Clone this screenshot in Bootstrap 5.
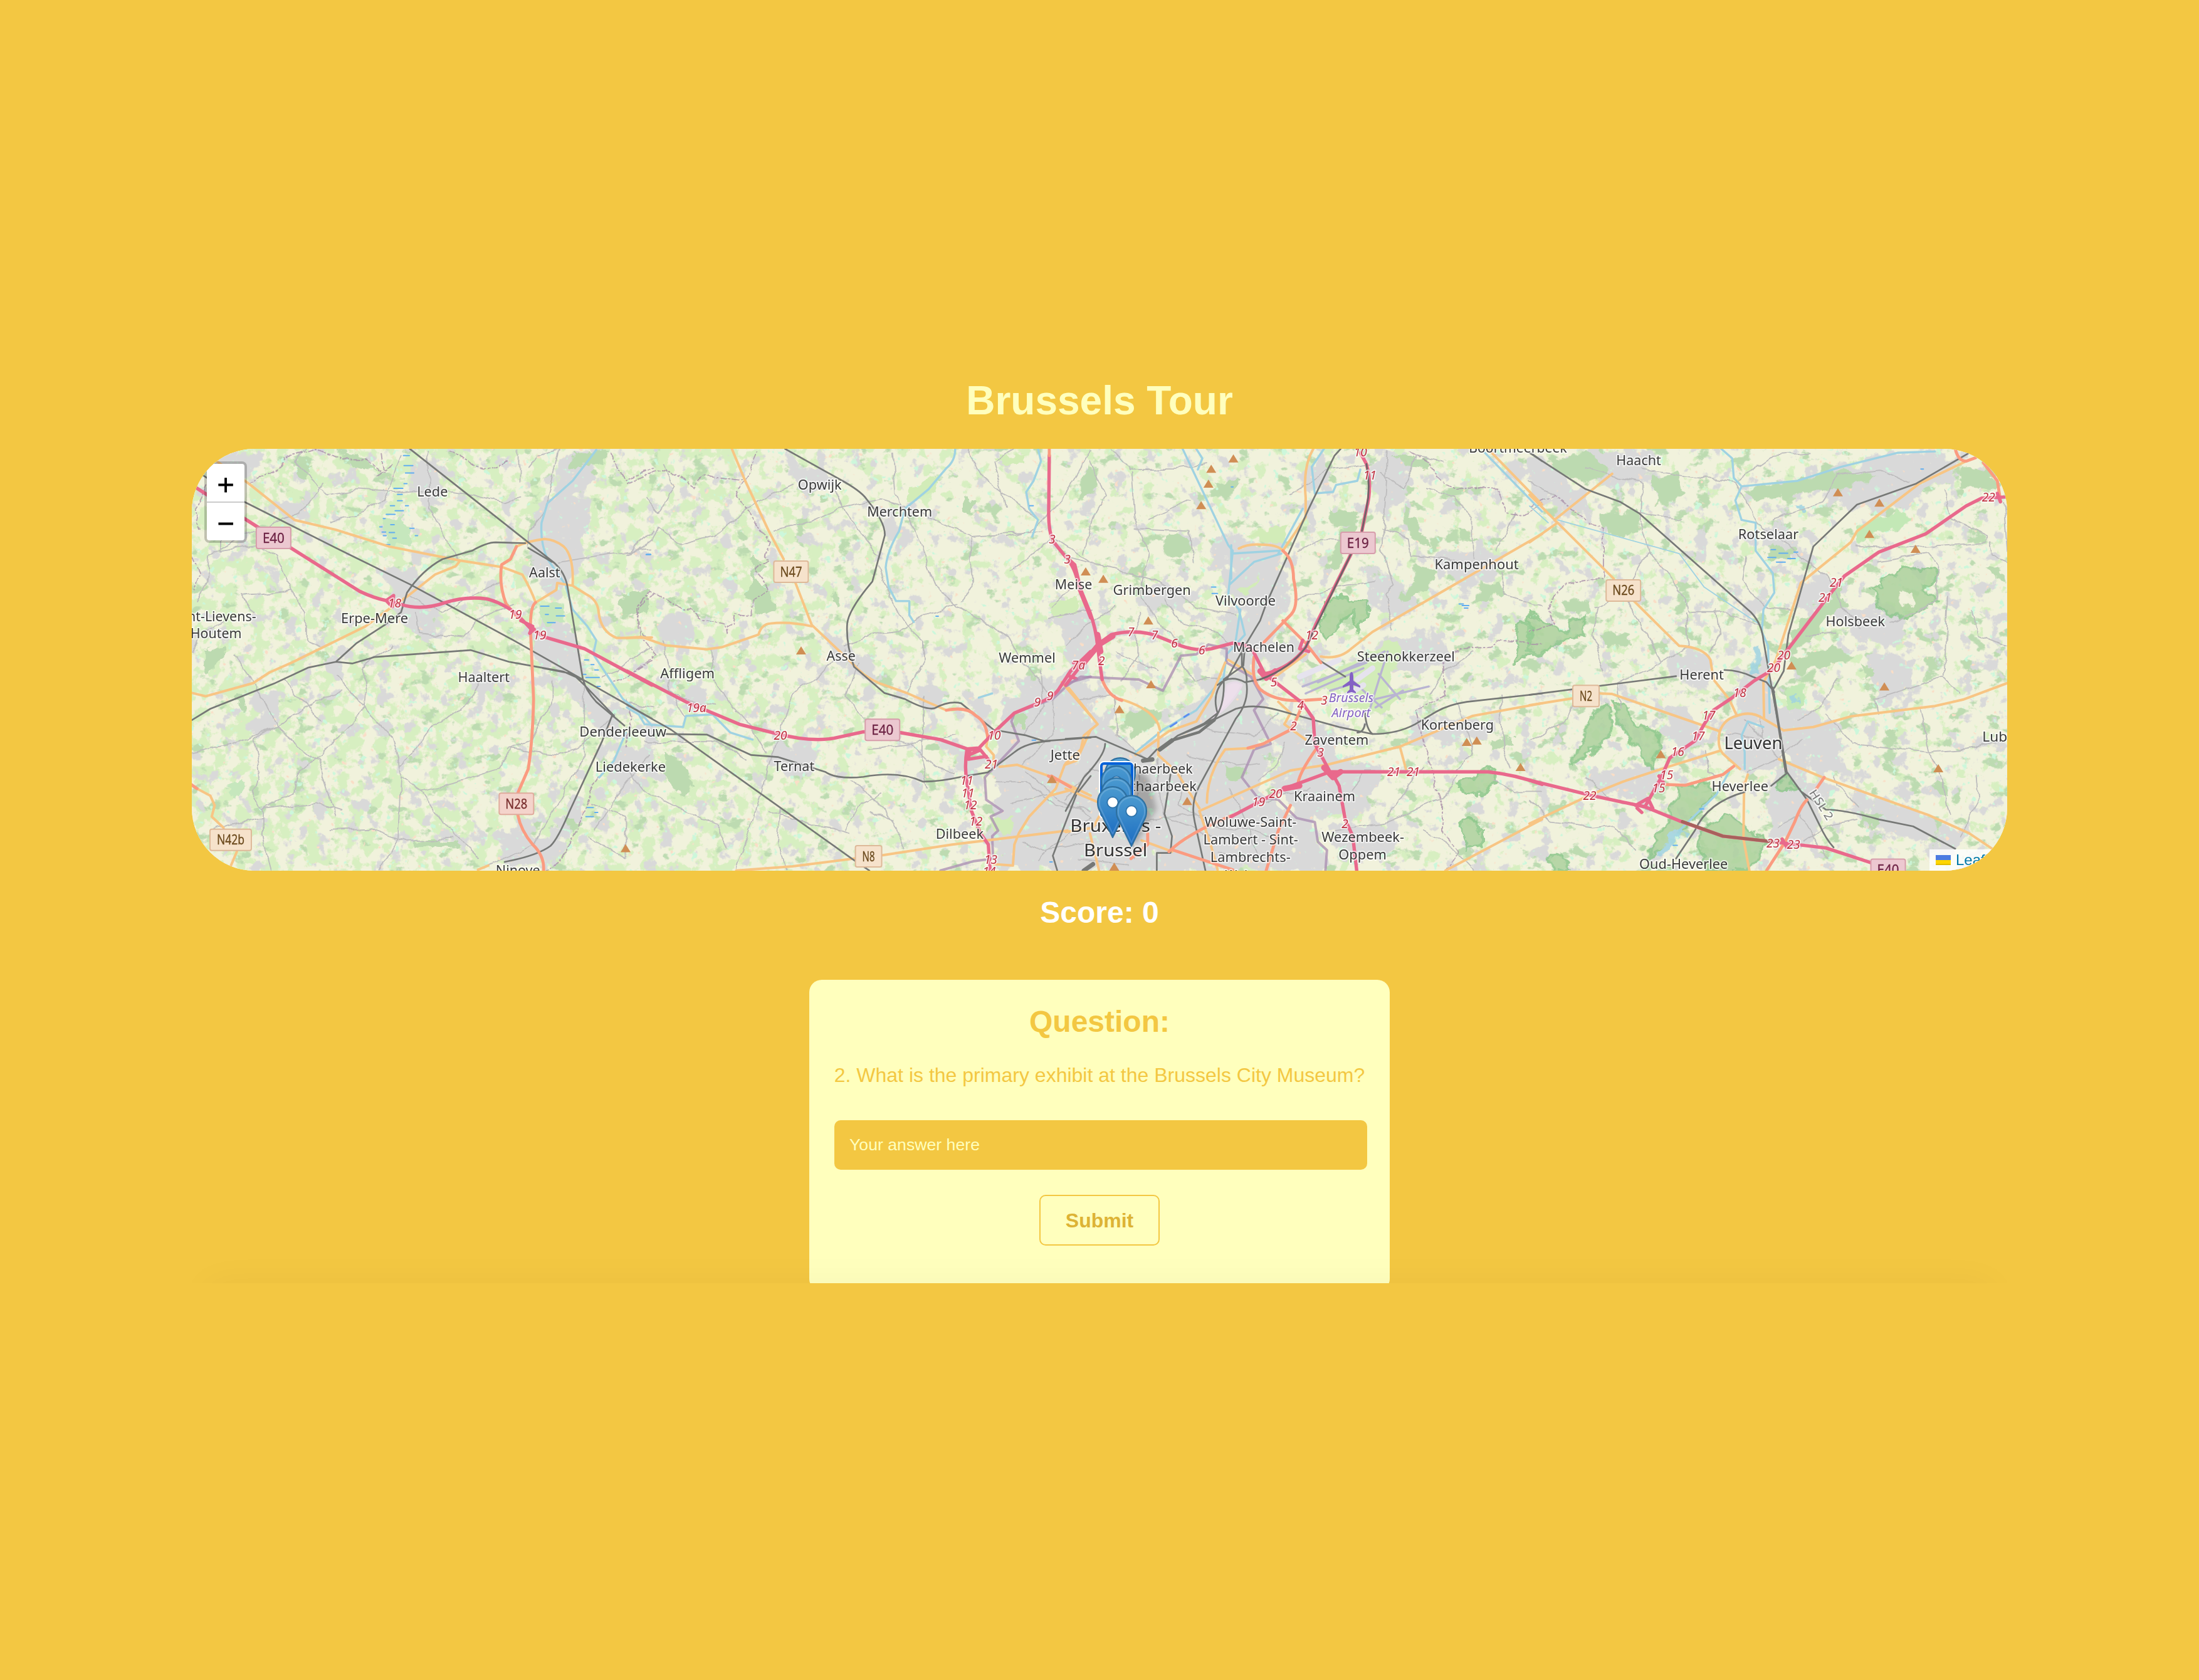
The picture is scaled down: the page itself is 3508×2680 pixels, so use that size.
<!DOCTYPE html>
<html lang="en">
<head>
<meta charset="utf-8">
<title>Brussels Tour</title>
<link href="https://cdn.jsdelivr.net/npm/bootstrap@5.3.0/dist/css/bootstrap.min.css" rel="stylesheet">
<style>
body{background:#f3c742;font-family:"Liberation Sans",Arial,sans-serif;height:2680px;overflow:hidden}
.stage{height:2047px;padding-top:603px}
.tour-title{font-size:64px;line-height:72px;margin-bottom:41px;color:#ffffbd}
.tour-map{width:2896px;height:673px;border-radius:100px;background:#f1f2dc}
.tour-map svg.sheet{width:2896px;height:673px}
.zoom-box{top:20px;left:20px;width:68px;border:4px solid rgba(0,0,0,.2);border-radius:8px;background-clip:padding-box}
.zoom-key{height:60px;font:36px/66px "DejaVu Sans",sans-serif;color:#000;-webkit-text-stroke:.9px #000;text-decoration:none}
.zoom-key:first-child{height:62px;border-bottom:2px solid #ccc}
.credit{right:0;bottom:0;height:34px;padding:0 10px;background:rgba(255,255,255,.8);font-size:24px;line-height:34px;color:#0078a8;gap:8px}
.score{font-size:48px;line-height:54px;margin:40px 0 80px}
.quiz{width:926px;height:497px;flex:none;border-radius:20px;background:#ffffbd;padding:40px;color:#f3c742}
.quiz h2{font-size:48px;line-height:54px;margin-bottom:40px}
.quiz p{font-size:32px;line-height:36px;margin-bottom:54px;white-space:nowrap}
.quiz .answer{width:850px;height:79px;border:0;border-radius:10px;background:#f3c742;padding:0 24px;font-size:26.67px;margin-bottom:40px}
.quiz .answer::placeholder{color:#ffffbd;opacity:1}
.quiz .send{width:192px;height:81px;border:2px solid #f3c742;border-radius:10px;font-size:32px;color:#ddb335;padding:0}
.foot-shade{top:100%;left:330px;right:330px;height:120px;box-shadow:0 0 60px rgba(0,0,0,.04)}
.sheet path{vector-effect:non-scaling-stroke;stroke-linejoin:round;stroke-linecap:round}
.ln{fill:none}
.lane{stroke:#bdbcbd;stroke-width:1.8}.bound{stroke:#a98fa9;stroke-width:1.9;stroke-dasharray:9 4 2 4;opacity:.8}
.region{stroke:#a98bb0;stroke-width:4;opacity:.75}.river{stroke:#9fd2e2;stroke-width:3.4}
.sec{stroke:#f8c584;stroke-width:4}.prim{stroke:#fb9b80;stroke-width:4.8}
.mway{stroke:#e9698c;stroke-width:5.4}.train{stroke:#767876;stroke-width:2.7}
.marsh{stroke:#61aef0;stroke-width:2}.runway{stroke:#b9b4d2;stroke-width:3.4}
.wood{fill:#add19e;stroke:#8bc68a;stroke-width:4}
.sheet text{font-family:"Noto Sans",sans-serif}
</style>
<script src="https://cdn.jsdelivr.net/npm/bootstrap@5.3.0/dist/js/bootstrap.bundle.min.js"></script>
</head>
<body>
<main class="stage position-relative overflow-hidden d-flex flex-column align-items-center">
<h1 class="tour-title fw-bold">Brussels Tour</h1>
<section class="tour-map position-relative overflow-hidden flex-shrink-0">
<svg class="sheet d-block" viewBox="306 716 2896 673">
<defs>
<linearGradient id="gl"><stop offset="0" stop-opacity=".32"/><stop offset=".3" stop-opacity=".3"/><stop offset=".4" stop-opacity=".1"/><stop offset="1" stop-opacity=".02"/></linearGradient>
<linearGradient id="gd"><stop offset="0" stop-opacity="0"/><stop offset=".5" stop-opacity=".02"/><stop offset="1" stop-opacity=".1"/></linearGradient>
<filter id="fl" filterUnits="userSpaceOnUse" x="306" y="716" width="2896" height="673" color-interpolation-filters="sRGB"><feTurbulence type="fractalNoise" baseFrequency=".045" numOctaves="5" seed="4"/><feComposite operator="arithmetic" in2="SourceGraphic" k2="1" k3=".5"/><feColorMatrix values="0 0 0 0 .845 0 0 0 0 .937 0 0 0 0 .755 0 0 0 11 -6.9"/></filter>
<filter id="fd" filterUnits="userSpaceOnUse" x="306" y="716" width="2896" height="673" color-interpolation-filters="sRGB"><feTurbulence type="fractalNoise" baseFrequency=".03 .04" numOctaves="5" seed="21"/><feComposite operator="arithmetic" in2="SourceGraphic" k2="1" k3=".5"/><feColorMatrix values="0 0 0 0 .74 0 0 0 0 .86 0 0 0 0 .695 0 0 0 12 -7.9"/></filter>
<filter id="fu" filterUnits="userSpaceOnUse" x="306" y="716" width="2896" height="673" color-interpolation-filters="sRGB"><feGaussianBlur in="SourceGraphic" stdDeviation="9" result="b"/><feTurbulence type="fractalNoise" baseFrequency=".04" numOctaves="5" seed="9"/><feComposite operator="arithmetic" in2="b" k2="1" k3=".5"/><feColorMatrix values="0 0 0 0 .852 0 0 0 0 .85 0 0 0 0 .852 0 0 0 12 -7.7"/></filter>
<filter id="fm" filterUnits="userSpaceOnUse" x="306" y="716" width="2896" height="673" color-interpolation-filters="sRGB"><feTurbulence type="fractalNoise" baseFrequency=".07" numOctaves="3" seed="33"/><feColorMatrix values="0 0 0 0 .8 0 0 0 0 .97 0 0 0 0 .86 0 0 0 12 -8.5"/></filter>
<filter id="fp" filterUnits="userSpaceOnUse" x="306" y="716" width="2896" height="673" color-interpolation-filters="sRGB"><feTurbulence type="fractalNoise" baseFrequency=".09" numOctaves="2" seed="52"/><feColorMatrix values="0 0 0 0 .98 0 0 0 0 .87 0 0 0 0 .78 0 0 0 12 -8.9"/></filter>
<filter id="rough" x="-5%" y="-5%" width="110%" height="110%"><feTurbulence type="fractalNoise" baseFrequency=".05" numOctaves="4" seed="5"/><feDisplacementMap in="SourceGraphic" scale="22" xChannelSelector="R" yChannelSelector="G"/></filter>
<filter id="wob" filterUnits="userSpaceOnUse" x="306" y="716" width="2896" height="673"><feTurbulence type="fractalNoise" baseFrequency=".03" numOctaves="3" seed="8"/><feDisplacementMap in="SourceGraphic" scale="13" xChannelSelector="R" yChannelSelector="G"/></filter>
<linearGradient id="pinfill" x2="0" y2="1"><stop stop-color="#4b9ad0"/><stop offset=".35" stop-color="#3b8bca"/><stop offset="1" stop-color="#1b6cc2"/></linearGradient>
<filter id="soft" x="-30%" y="-30%" width="160%" height="160%"><feGaussianBlur stdDeviation="4"/></filter>
<g id="pin"><path d="M0 0L-22-45C-24-49-24-53-24-57A24 24 0 0 1 24-57C24-53 24-49 22-45Z" fill="url(#pinfill)" stroke="#2e6f9f" stroke-width="2"/><path d="M0-6L-19-46C-22-51-21-54-21-57A21 21 0 0 1 21-57C21-54 22-51 19-46Z" fill="none" stroke="#fff" stroke-opacity=".16" stroke-width="2"/><circle cy="-56" r="8.7" fill="#fff" stroke="#2d72aa" stroke-width="1.8"/></g>
</defs>
<rect x="306" y="716" width="2896" height="673" fill="#f1f2dc"/>
<rect x="306" y="716" width="2896" height="673" fill="url(#gl)" filter="url(#fl)"/>
<rect x="306" y="716" width="2896" height="673" fill="url(#gd)" filter="url(#fd)"/>
<!-- built-up areas -->
<g filter="url(#fu)">
<rect x="306" y="716" width="2896" height="673" fill-opacity=".06"/>
<g transform="translate(300 700) scale(.4719 .4464)"><path d="M770 80L830 60L860 190L800 280L770 190ZM1150 380L1200 240L1280 60L1380 30L1340 150L1340 430L1290 520L1220 570L1180 480ZM670 490L760 500L840 600L850 700L760 700L700 600ZM1180 600L1290 680L1340 850L1250 860L1180 760ZM1250 850L1340 870L1470 1000L1420 1090L1350 970ZM960 830L1060 830L1060 900L970 910ZM220 900L290 960L300 1030L230 1040ZM480 760L530 780L515 850L480 830ZM1050 1390L1150 1400L1240 1430L1290 1330L1310 1250L1350 1300L1250 1500L1080 1530ZM30 70L200 50L230 120L150 150ZM1440 1080L1560 1100L1540 1250L1440 1240ZM300 220L400 240L360 310Z"/></g>
<g transform="translate(1000 700) scale(.4719 .4464)"><path d="M560 90L690 130L680 190L600 200ZM860 270L980 300L930 370L870 330ZM100 640L260 640L230 730L120 720ZM630 640L760 760L850 830L790 860L700 770ZM970 870L1070 900L1050 970L980 960ZM500 1090L640 1100L620 1200L520 1180ZM1280 930L1568 800L1568 1543L1240 1543L1240 1180ZM1060 1050L1200 1180L1130 1200ZM1420 630L1568 620L1568 690L1440 690ZM150 900L270 890L270 950L160 960ZM1130 920L1230 960L1240 1040Z"/></g>
<g transform="translate(1700 700) scale(.4847 .4464)"><path d="M0 1000L120 1010L240 1120L360 1050L480 850L620 830L680 1040L640 1300L800 1340L850 1543L0 1543ZM480 400L560 350L720 400L720 640L620 830L500 750L580 600ZM0 600L90 640L110 720L60 780L0 790ZM250 520L420 540L400 600L260 590ZM790 100L880 50L800 260ZM990 60L1120 60L1130 220L1040 250ZM640 720L820 760L700 850ZM700 1020L860 1010L900 1160L1060 1170L960 1340L800 1340L720 1240ZM1050 700L1250 720L1280 800L1010 830ZM1150 1000L1400 1010L1380 1060L1130 1090ZM1230 410L1410 430L1410 520L1240 500ZM1020 480L1080 500L1180 600L1100 640L1040 600ZM1400 60L1568 100L1568 200ZM880 1370L1100 1390L1060 1500L900 1500ZM740 1000L860 1060L860 1150Z"/></g>
<g transform="translate(2440 700) scale(.4975 .4464)"><path d="M180 50L400 40L350 150L240 180ZM620 1000L800 1020L820 1180L660 1190ZM680 810L780 860L800 1010L660 980ZM800 980L980 1000L1000 1200L850 1180ZM800 1190L950 1240L900 1470L780 1400L770 1250ZM900 120L1200 60L1400 50L1200 250L980 240ZM450 760L560 760L600 870L470 880ZM860 500L960 490L960 620L870 600ZM740 320L880 340L850 420L760 390ZM980 600L1180 620L1240 720L1080 730ZM1100 750L1210 760L1230 900L1120 970ZM420 950L560 1020L540 1110L440 1060ZM0 50L150 180L250 260L120 280L0 120ZM1020 1240L1230 1330L1400 1420L1350 1470L1100 1380ZM180 1200L430 1170L400 1290L260 1270ZM1450 720L1500 760L1480 830ZM640 520L740 600L720 650Z"/></g>
</g>
<rect x="306" y="716" width="2896" height="673" filter="url(#fm)"/>
<rect x="306" y="716" width="2896" height="673" filter="url(#fp)"/>
<!-- woods -->
<g filter="url(#rough)" fill="#bcdab0">
<g transform="translate(300 700) scale(.4719 .4464)"><path d="M1300 50L1420 40L1400 90L1300 100ZM380 90L420 95L400 150L370 140ZM1460 580L1560 540L1540 620L1460 630ZM60 760L130 740L120 790L60 830ZM760 1440L920 1435L920 1455L770 1460ZM520 50L600 70L640 120L560 100ZM1270 1350L1330 1370L1300 1420ZM160 920L200 910L190 980Z"/><path fill="#c6e7bd" d="M1190 590L1270 590L1270 650L1220 670L1190 640ZM660 290L730 280L750 370L680 380ZM130 1240L190 1230L170 1280Z"/></g>
<g transform="translate(1000 700) scale(.4719 .4464)"><path d="M430 420L480 460L430 480L480 540L500 610L450 630L410 560ZM0 560L70 540L30 610L0 615ZM130 1120L180 1160L230 1240L180 1280L130 1200ZM690 540L720 560L710 600L690 580ZM1140 210L1180 220L1170 270L1130 260ZM1300 980L1360 990L1340 1050L1300 1020Z"/><path fill="#d2ecb8" d="M960 180L1060 120L1030 190L950 230ZM1260 60L1350 50L1350 90L1270 90ZM1230 1350L1300 1350L1300 1410L1250 1410ZM1430 590L1530 560L1520 620L1440 640Z"/></g>
<g transform="translate(1700 700) scale(.4847 .4464)"><path d="M80 90L110 110L100 180L40 230L60 140ZM490 150L565 140L560 200L530 215ZM330 350L400 340L410 410L320 415ZM860 250L960 260L950 310L890 310ZM1110 240L1150 280L1200 380L1140 360ZM1080 60L1190 60L1200 110L1130 100ZM1140 440L1230 480L1190 540L1100 590L1090 570L1150 500ZM1370 520L1430 510L1440 550L1340 590ZM900 330L960 300L900 460L860 470ZM190 980L300 960L300 1020L220 1070ZM520 1170L600 1180L570 1230L530 1220ZM1400 1080L1480 1060L1480 1090L1400 1110ZM1280 310L1360 370L1300 360Z"/><path fill="#d2ecb8" d="M600 340L740 300L720 370L640 370ZM560 540L640 490L590 560ZM800 880L1040 740L1090 720L1100 770L1050 900L1150 890L1040 980L930 960L900 880L820 910Z"/></g>
<g transform="translate(2440 700) scale(.4975 .4464)"><path d="M60 80L180 50L250 110L230 150L140 150ZM390 130L480 130L490 200L410 240ZM690 180L840 150L1000 110L1120 130L1000 180L880 190L720 220ZM1370 110L1480 100L1500 180L1380 170ZM230 270L350 260L340 340L240 330ZM840 690L970 570L990 600L900 720L840 750ZM960 540L1000 530L1010 600L980 600ZM100 580L190 580L190 630L110 620ZM770 390L850 390L850 430L760 430ZM830 790L980 740L1040 780L870 840ZM230 700L320 690L310 750L240 750ZM1060 1340L1130 1340L1110 1390L1060 1380ZM1140 1040L1180 1040L1170 1090ZM1060 810L1100 830L1080 860ZM1470 460L1520 460L1520 510ZM1290 1240L1340 1230L1330 1270Z"/><path fill="#c3e8b6" d="M1050 310L1200 260L1230 290L1050 370ZM820 880L880 880L880 960L820 970Z"/></g>
</g>
<g filter="url(#rough)" opacity=".85">
<g transform="translate(1700 700) scale(.4847 .4464)"><path class="wood" d="M870 570L910 560L925 590L990 570L1005 610L960 680L950 620L900 660L850 720L830 690ZM1490 650L1568 660L1568 760L1470 800L1500 740L1480 690ZM1290 1230L1400 1180L1430 1230L1350 1270L1300 1260ZM1300 1370L1330 1360L1370 1400L1370 1460L1320 1470Z"/></g>
<g transform="translate(2440 700) scale(.4975 .4464)"><path class="wood" d="M1090 540L1140 530L1130 500L1220 460L1310 470L1300 510L1260 530L1310 580L1250 610L1200 645L1140 620ZM0 620L70 660L120 690L150 640L175 640L175 700L100 720L60 760L0 765ZM190 1000L240 950L270 1030L210 1110L130 1160L170 1090ZM265 950L300 945L330 1010L415 1050L410 1100L390 1190L350 1110L290 1030ZM480 1240L580 1230L590 1270L510 1380L440 1450L370 1500L430 1400ZM550 1400L640 1340L760 1440L700 1543L560 1543ZM780 1240L820 1200L860 1250L790 1260ZM60 1490L100 1480L130 1543L80 1543Z"/><path fill="#f1f2dc" d="M1190 540L1230 540L1230 590L1190 590Z"/><path fill="#9fd2e2" d="M720 740L740 740L735 840L720 840ZM860 240L890 235L890 260L870 260ZM835 920L860 920L865 945L840 945ZM470 1400L490 1390L510 1400L470 1440L425 1490L400 1490Z"/></g>
</g>
<!-- lanes and municipal borders -->
<g class="ln" filter="url(#wob)">
<g transform="translate(300 700) scale(.4719 .4464)"><path class="lane" d="M360 80L470 200L580 180L700 190M360 80L400 40M480 300L570 270L660 220L720 60M810 40L820 250L910 430M700 190L820 180L960 200L1070 230L1120 210M1255 40L1210 250L1150 330L1150 380M1150 100L1180 60L1250 40M70 420L65 510L30 580M70 420L180 350L300 300L380 270L460 150M350 540L300 420L230 380L110 400L110 320M350 540L180 560L220 620M350 540L400 620L400 720L450 740M690 740L590 820L600 900L595 965L450 1130L370 1180L355 1270L250 1325L220 1260L245 1190L225 1070L300 1030L440 1150L500 1350M13 1120L150 1090L300 1030L400 960L520 900M160 780L230 880L300 1030M320 860L380 930L450 1010M500 850L600 965L690 1070L720 1170L710 1430L650 1540M720 1170L830 1020L920 970L990 870M720 1210L790 1260L900 1230L1050 1180L1090 1110L1250 1130L1330 1100L1440 980M790 1260L860 1370L980 1500M250 1325L250 1420L280 1540M250 1325L430 1300L520 1330M480 1400L620 1395L740 1440L900 1430M80 1400L250 1350M740 560L860 620L1000 540L1060 510M770 620L780 690L930 710L980 640L1100 590M1230 860L1230 930L1160 1080L1080 1110M1340 870L1340 1130L1260 1290L1170 1450L1010 1530M1560 1130L1440 1290L1380 1400M1360 1300L1480 1350L1480 1500M1360 1420L1480 1500M1250 440L1420 410L1560 395M1568 330L1500 400M1568 740L1450 830L1400 850M13 760L40 700L120 650M1440 930L1568 960M1120 40L1120 150"/>
<path class="bound" d="M205 165L300 110L320 70L440 40L520 75L600 75L660 120L650 40M640 130L690 90M60 160L20 250L40 330M13 420L40 480L20 540M880 40L1000 110L1080 80M1430 50L1480 150L1568 110M1568 550L1525 600L1520 680L1568 720M1568 790L1470 860L1430 870M1480 930L1500 990L1480 1100M1390 1210L1360 1260L1325 1370L1290 1440L1280 1480L1200 1543"/></g>
<g transform="translate(1000 700) scale(.4719 .4464)"><path class="lane" d="M0 410L60 390L100 320L180 380L300 345L360 290L440 220L560 160M120 90L160 170L110 260L70 210M500 330L640 290L720 250L860 215L940 240L1080 310L1160 345L1400 330M700 180L740 270L790 340L860 430M900 40L910 200L940 260L980 330L1040 520L1120 600L1290 710L1340 800L1440 930M1150 40L1200 130L1290 210L1380 280M1280 240L1240 80L1310 40M1568 40L1480 200L1430 260L1360 330L1290 350M1160 350L1170 510L1130 580M1568 440L1440 350L1350 430L1300 470M850 450L880 560L940 660L1000 720L1000 800L950 910M740 740L860 690L940 680L1010 630L1120 590M740 750L640 860L560 910L490 1130L420 1390L370 1540M280 750L290 850L340 940L430 1050L470 1120M120 720L150 830L140 900L200 1000M150 920L300 950M60 1080L300 1080L400 1140M0 1170L120 1180M0 1180L60 1260L190 1330L300 1370L340 1460M780 800L740 930L860 1060L960 1090L1040 1170L1100 1190M820 1110L960 1090L1110 1060M760 1220L830 1280L910 1390L940 1460M820 1330L900 1370M740 1400L790 1300L860 1270M480 1330L620 1380L700 1390L750 1410M520 1320L510 1450L540 1543M1000 920L1000 1140L1020 1250M1400 830L1410 960L1340 1060M1440 940L1440 1060L1330 1170M1350 1190L1460 1290L1568 1350M1250 1230L1350 1230L1450 1310L1568 1330M1300 1300L1420 1270M1390 1500L1568 1350M1340 1440L1420 1470L1568 1440M1430 640L1568 610M1500 540L1440 600"/>
<path class="bound" d="M0 160L130 105L230 170L260 130L395 150L445 36M395 150L370 200L440 310L485 370L470 410L485 435L430 470L480 540L425 580L425 630L370 625L365 665L340 665L335 695L330 660L245 640L215 605L190 610L75 540L35 600L45 700L100 770L0 850"/></g>
<g transform="translate(1700 700) scale(.4847 .4464)"><path class="lane" d="M0 420L160 460L300 510L430 600L560 630M150 40L210 110L360 110L460 90M220 120L230 280L270 400L250 560L300 650L380 740M60 410L90 280L130 200L80 80M270 290L410 220M230 320L410 330L420 440M1060 40L1040 400L1080 520L1050 560L1080 680M740 200L870 110L1000 90M760 400L840 360L940 360M1040 120L1110 180L1160 60L1240 80M1040 320L1130 360L1140 420L1240 430L1360 460M1190 180L1280 210L1340 280L1340 430M1480 260L1420 400M760 580L880 530L1020 510M0 740L60 670L160 600M240 620L240 780L180 860M160 760L300 830M330 580L380 660L500 690L560 760M370 780L420 860L510 860M40 940L160 920L170 1060L260 1140M0 1290L80 1180L180 1180M240 1200L220 1500M300 1140L320 1350L480 1420M390 1180L370 1310L460 1360M460 1040L620 1060L700 980M400 1130L560 1170L640 1160M260 1360L460 1340M540 1250L580 1350L640 1490M640 1300L800 1250M880 1400L1050 1370L1250 1280L1290 1200M940 1260L990 1190L1180 1190M1180 1170L1130 1240L1060 1350M1200 910L1240 830L1340 760M1290 940L1340 1130L1290 1180M1180 1400L1260 1450L1340 1543M1410 1220L1480 1260L1568 1260M1430 920L1440 1100L1460 1180M1568 600L1450 560L1430 480M640 1220L700 1160L720 1080M490 1390L620 1400L700 1440M500 1480L600 1500M40 1500L200 1520M20 1420L120 1370"/>
<path class="bound" d="M1140 50L1190 80L1220 140L1290 180L1420 175L1450 260L1510 270L1568 230M1250 920L1150 970L1200 1170L1240 1300L1240 1400L1290 1470L1250 1540M1250 920L1240 800L1300 750L1400 745L1420 720L1568 730"/></g>
<g transform="translate(2440 700) scale(.4975 .4464)"><path class="lane" d="M180 110L360 155L355 300L380 400L300 560L210 600M360 110L660 155L730 300L850 400L950 490L1000 600L1060 680M380 400L500 560L510 620L620 620L740 665M500 620L510 740L400 820L280 870L290 960M350 265L480 285M300 560L350 640L420 800M660 155L780 60L900 50M780 290L940 230L980 130L1120 110L1220 160M690 420L680 510L750 600L840 610M1040 380L1240 390L1460 370L1470 350L1350 280L1330 180M1120 440L1280 410L1310 450L1300 580L1160 660M1340 570L1330 850L1110 930L1120 980M1330 850L1380 910M990 860L930 960L860 1010M880 700L980 690M950 980L1040 1090L1280 1120L1400 1110L1532 1080M1280 1120L1250 960M1060 1320L990 1240L980 1200M1280 1120L1310 1180L1350 1340M1380 1420L1440 1300L1430 1200M0 1080L110 1010L140 950M0 1290L70 1370L200 1390L270 1380L340 1470M180 1210L260 1290L400 1330M560 1110L570 1190L620 1210M740 990L740 1070L800 1140M690 1000L740 1070M640 1050L740 1075M700 1190L780 1150L880 1070M800 1390L870 1340L950 1500M880 1440L960 1380L1050 1360M1480 370L1490 420L1532 440M1420 620L1440 700L1532 740M240 830L200 700L220 600M0 150L80 200M600 610L610 700L580 760M1520 230L1532 400"/>
<path class="bound" d="M0 240L80 200L140 250L190 300L235 315L235 500L110 520L70 560L60 610L80 660L0 690"/></g>
</g>
<!-- main roads, railways and rivers -->
<g class="ln">
<g transform="translate(300 700) scale(.4719 .4464)">
<path class="river" d="M1380 40L1300 150L1215 230L1195 300Q1190 370 1215 430L1275 520L1300 610L1350 670L1380 720L1370 770L1420 850L1470 930L1530 980L1568 1025M1480 1050L1440 1150L1390 1210"/>
<path class="marsh" d="M728 60h20M730 96h30M735 122h28M730 160h10M696 177h30M708 199h16M708 221h16M684 239h14M700 257h28M670 270h30M735 239h10M660 285h6M648 315h8M685 307h12M750 320h14M656 333h12M680 335h18M660 346h10M692 355h12M668 378h14M768 346h8M1192 598h28M1242 605h20M1208 628h10M1245 633h28M1215 657h26M1340 790h14M1362 807h10M1375 826h12M1335 842h10M1345 853h45M1383 885h10M1350 1318h20M1375 1335h10M1345 1350h25M1550 413h14"/>
<path class="sec" d="M90 75L205 160L360 290L500 325L680 385L920 435L1060 458L1130 485Q1160 540 1175 585L1245 540L1248 515L1300 525Q1305 420 1270 385Q1240 360 1205 358Q1150 365 1110 385M920 435L905 455L835 485L745 560L690 600L600 670L350 800L275 835L220 873L60 920L13 908M1300 525L1345 555Q1385 575 1388 620Q1395 690 1450 712L1568 710M30 1250L75 1275L90 1310L80 1350L120 1390M165 1475L145 1525M980 1540L1015 1525"/>
<path class="train" d="M750 36L1240 445Q1275 480 1283 530L1335 860Q1345 900 1380 940L1475 1025M50 130L190 225L500 390L750 520L1100 720L1568 1000M13 1005L75 965L290 875L405 818L500 797L555 803L630 780L955 755L1085 797L1270 832L1340 865M500 797L570 730L665 665L720 620L740 550Q790 470 860 430L960 400Q1010 370 1040 370L1140 373M1435 985L1400 1080L1290 1330Q1250 1430 1225 1455Q1180 1490 1070 1512M1230 440L1150 390M1200 820L1300 840L1340 880L1440 990"/>
<path class="prim" d="M1110 385L1090 430L1060 450Q1050 520 1075 590L1115 640M1175 585Q1155 600 1158 690L1168 930Q1165 1080 1150 1180L1115 1265M1115 1345Q1125 1400 1165 1450Q1205 1490 1202 1543M10 1235L30 1250"/>
<path class="mway" d="M20 170L235 315L580 545Q630 570 670 578L720 592Q790 615 870 585Q940 562 1010 572Q1060 585 1110 625L1160 680L1210 710L1340 750L1568 880M670 578L695 560L690 600ZM1125 650L1165 670L1155 695L1170 680"/></g>
<g transform="translate(1000 700) scale(.4719 .4464)">
<path class="river" d="M1110 36Q1110 80 1080 105L1020 180L940 250L920 330Q880 400 875 460L885 530L910 580L955 580L955 630L970 655M1390 36L1400 80L1375 150L1350 190L1360 250L1390 290L1370 350M0 960L40 985L60 1020L190 1030L200 990L290 985L350 1050L425 1075M1190 925L1235 910"/>
<path class="region" d="M1568 850L1500 870L1440 930L1310 980L1300 1010L1325 1080L1210 1210L1215 1290L1270 1330L1230 1350L1255 1400L1235 1420L1238 1500L1170 1510L1060 1543"/>
<path class="marsh" d="M65 414h15M1362 239h12M1370 1077h12M1045 634h8M1430 1512h8"/>
<path class="sec" d="M355 36L400 150L480 330L530 430M570 515L625 665L760 800Q800 850 850 872L950 910L1080 970M0 712L50 708L130 738L270 752L320 745L445 700Q455 662 485 660Q550 652 625 670M1470 870L1568 990M1220 1070L1215 1100L1240 1130L1240 1165M1260 1172L1320 1165L1440 1210L1568 1275M1568 1040L1520 1150L1480 1165L1450 1250L1360 1350L1325 1410L1310 1450L1305 1525L1240 1520M1430 1275L1520 1250M370 1543L560 1528L770 1500M865 1488L1100 1450L1490 1400"/>
<path class="train" d="M535 36L720 145Q790 185 810 215Q875 300 872 345L830 510Q750 610 745 660Q740 730 768 815L870 908L940 930Q1010 970 1040 963Q1090 935 1130 945L1240 1040L1350 1060L1410 1080L1568 1068M0 950L150 1040L760 1500L820 1543M130 1055L270 1057L420 1130L510 1137L670 1190Q710 1218 800 1208Q920 1185 1000 1225Q1060 1225 1130 1208L1220 1192L1310 1120Q1350 1085 1430 1080M1568 1205L1520 1270L1440 1490L1455 1543"/>
<path class="prim" d="M1080 970Q1150 955 1180 990Q1215 1010 1220 1070M1435 1205L1500 1245M1425 1205L1450 1220"/>
<path class="mway" d="M0 830L200 940L380 1020L500 1052Q620 1085 700 1070L800 1047L925 1050L1060 1075L1150 1108L1190 1105L1245 1045L1310 980L1390 945Q1440 925 1460 895L1500 830L1568 760M1428 60L1426 270Q1426 330 1440 365L1490 430Q1520 470 1530 540L1568 640M1150 1108Q1140 1170 1150 1230L1165 1330L1195 1410L1222 1450L1228 1543M1190 1105L1225 1150M1155 1130L1195 1112L1160 1110L1155 1145L1215 1135M1500 830L1490 845L1520 858M1510 800L1550 800"/><path class="prim" d="M1428 30V60"/></g>
<g transform="translate(1700 700) scale(.4847 .4464)">
<path class="river" d="M385 36L535 380L550 400L535 560L570 610L590 700L530 770L520 850L430 970L320 1040L230 1120M700 400L550 410M710 410L620 440L540 520M780 250L700 410M970 110L960 150L890 165L880 190L820 195L810 100L850 36M430 36L450 70L435 110M1380 50L1568 260"/>
<path class="river" d="M545 380L545 500M575 610L560 720"/>
<path class="runway" d="M780 885L990 800M790 910L980 820M830 870L1050 760M1000 970L1060 760M1020 930L1195 885M940 860L1040 960M870 900L930 880M1020 960L1110 900M1030 840L1100 930"/>
<path d="M770 850L900 790M960 860L1010 820M920 920L980 880" stroke="#e6e3ee" stroke-width="9"/>
<path d="M530 880Q560 860 580 880Q550 950 480 1000Q525 940 530 880Z" fill="#eddfeb" stroke="#e8dce8" stroke-width="3"/>
<path class="region" d="M0 885L50 850L240 860L320 900L380 775L430 770L470 735L530 750L530 800L610 850L650 930L620 970L675 1090L620 1110L580 1210L630 1280L700 1290L760 1355L820 1370L830 1440L860 1470L855 1543"/>
<path class="marsh" d="M480 530h14M482 553h18M1295 590h14M1305 596h22M1312 605h12M545 172h6"/><path d="M345 1028L365 1014M390 994L405 984" stroke="#5b8df0" stroke-width="3"/>
<path class="sec" d="M815 36Q780 100 790 210L790 280L715 400Q700 378 640 378Q600 375 570 392M1568 340L1010 690L940 750Q900 790 840 778M1390 36L1568 235M1568 945L1340 990L1100 1100L860 1165L740 1185L440 1330L480 1460L500 1540M1100 1100L1120 1180M535 790L610 840M525 800L480 920L430 1010L340 1045L230 1130M305 1050L305 1130L365 1190L440 1320M180 930Q300 970 310 1040M10 890L105 1020L60 1060L50 1110L0 1160M465 1300Q465 1200 525 1110L620 1105M1568 1360L1250 1543M0 1250L110 1300M250 1435L350 1475M700 940L740 980L720 1020L790 1075M690 850L790 770M0 1405L90 1390L110 1350M80 1410L110 1543"/>
<path class="train" d="M905 36L885 60L800 250L660 590L640 650L590 740L530 860M1568 910L1320 940Q1260 950 1220 975L1150 1020Q1090 1055 1010 1055L900 1030L700 970Q620 945 560 965L440 1030L370 1060L310 1110M590 740L585 810L520 860Q525 950 490 1000L370 1060M595 870Q605 940 560 1000L440 1240Q410 1300 425 1370L460 1543M520 865Q480 910 500 980L440 1030M580 730L580 810Q600 840 595 870M500 880Q540 840 590 870L640 860M840 795L920 850M985 980Q990 1040 1010 1055M985 1020Q980 1050 960 1050M0 1072L100 1065L270 1145L300 1110M130 1090Q130 1130 60 1210L0 1330M345 1200L325 1340L350 1420L345 1480L300 1480L300 1543M1530 50L1568 80"/><path d="M310 1110L350 1078M255 1150L285 1146M60 1543L90 1520" stroke="#767876" stroke-width="7"/><path d="M350 1078L440 1048L490 1005" stroke="#767876" stroke-width="4.5"/>
<path class="prim" d="M715 400Q750 430 750 500Q770 600 740 630L650 730M715 650L790 730L840 800M120 860Q140 920 185 935M620 780Q610 860 640 895Q690 940 780 935L850 930M780 945Q760 1010 740 1040L650 1090L600 1105M830 1100Q770 1190 765 1230M740 1310L700 1400L660 1543M340 1475Q400 1410 550 1345M355 1470L550 1540M270 1410V1450L215 1500"/>
<path class="mway" d="M0 420L30 450L50 540L80 620Q100 680 105 740L120 860M0 880L50 810L105 735L150 700Q220 680 290 700L380 740Q430 760 480 750L550 730L600 740L620 765L655 840Q740 820 790 745L825 660L940 410M975 330L990 250Q1010 170 990 90L970 50M655 840L780 945L815 1000L820 1090L870 1190L1390 1190Q1480 1200 1568 1235M870 1190L720 1250L545 1350M875 1190L900 1240L920 1360L945 1420L958 1543M780 720L770 750L800 760"/>
<path class="mway" style="stroke-width:9" d="M60 800L110 735L155 705M105 700L115 760M640 830L660 855L690 830M850 1175L880 1210L905 1190M720 1250L770 1240"/>
<path d="M640 860Q740 820 790 745L940 410M975 330L990 250Q1005 170 990 90" stroke="#6e6468" stroke-width="2.8"/></g>
<g transform="translate(2440 700) scale(.4975 .4464)">
<path class="river" d="M615 36L650 70L655 140L680 170L860 150L1000 100L1180 50L1300 45M680 170L660 220L680 290L725 300L725 400L780 480L785 550L750 610L745 690L765 740L770 980M640 1190L600 1270L480 1400M690 1180L690 1120L680 1060L700 1010L750 1030"/><path class="river" style="stroke-width:1.8" d="M0 240L60 300M90 290L480 410L560 530L740 665"/>
<path class="marsh" d="M775 396h14M800 409h28M848 405h12M764 424h26M828 428h24M792 441h28M545 1323h14M460 1453h14M1255 108h8"/>
<path class="sec" d="M0 200L90 300L270 500M335 580L480 740Q560 745 580 790L590 860L640 930L665 990M0 370L90 300L80 290L265 125M1400 80L1250 160L1050 330L1030 370L870 515L790 790L750 870L752 1000M0 952L135 928M225 910L265 912L610 1045Q625 1000 665 990Q710 970 750 1000L815 1042L910 1030L1030 992L1300 955L1390 932L1532 873M610 1045Q600 1100 620 1125L675 1180M0 1375L200 1270L300 1225L450 1170L610 1115M800 1145L940 1210L1280 1345L1410 1410L1490 1470M700 1200L688 1240L686 1430L705 1543"/>
<path class="train" d="M0 50L180 180L290 225L350 265L710 620Q745 660 750 720L775 880L805 1060L825 1190L890 1290L930 1380Q950 1430 975 1460M0 915L470 848M625 826Q670 826 715 850L760 870L785 905M1410 50L1240 160L1050 235L910 385L830 700L815 830L785 890M825 1190L870 1260L950 1325Q1010 1325 1120 1360L1230 1385L1365 1465M470 1500L530 1400Q570 1300 690 1262M775 1240L825 1195"/><path d="M780 890L822 1190" stroke="#767876" stroke-width="4"/>
<path class="prim" d="M430 1235L500 1238L620 1200L655 1170M945 1210L920 1250M890 1290Q870 1310 850 1370L820 1440L760 1543M1365 36Q1375 80 1400 80L1430 68M1455 85L1500 150L1510 220"/>
<path class="mway" d="M0 1220L200 1275L370 1315L480 1365L620 1420L780 1440L950 1462L1095 1515M370 1315L420 1215L450 1140L530 1080L560 1020L590 970L650 925L720 865L780 825L830 750L960 560L1010 490L1120 405L1270 340L1400 240L1450 212L1525 208M340 1310L380 1285L395 1320M345 1320L360 1335M1500 195L1510 225M415 1205L430 1230M810 1430L825 1460"/><path d="M490 1368L620 1420L780 1440" stroke="#a8615c" stroke-width="5"/></g>
</g>
<g id="hills" fill="#d08e54"></g>
<g id="shields"></g>
<g id="names"></g>
<path d="M2156 1072c2 0 3 4 3 8v6l11 8v3l-11-4v7l4 4v2l-7-2-7 2v-2l4-4v-7l-11 4v-3l11-8v-6c0-4 1-8 3-8z" fill="#8461c4"/>
<!-- tour stops -->
<path d="M1800 1335L1808 1225L1832 1240L1845 1290L1812 1347Z" fill="#000" opacity=".24" filter="url(#soft)"/>
<use href="#pin" x="1787" y="1290"/>
<rect x="1755" y="1216" width="52" height="88" rx="6" fill="none" stroke="#fff" stroke-width="4"/><rect x="1757" y="1218" width="49" height="84" rx="4" fill="none" stroke="#0060d8" stroke-width="4"/>
<use href="#pin" x="1781" y="1303"/><use href="#pin" x="1781" y="1322"/><use href="#pin" x="1775" y="1336"/><use href="#pin" x="1805" y="1350"/>
</svg>
<div class="zoom-box position-absolute bg-white text-center overflow-hidden"><a class="zoom-key d-block">+</a><a class="zoom-key d-block">−</a></div>
<div class="credit position-absolute d-flex align-items-center"><svg width="24" height="16"><path fill="#4c7be1" d="M0 0h24v8H0z"/><path fill="#ffd500" d="M0 8h24v6H0z"/><path fill="#e0bc00" d="M0 14h24v2H0z"/></svg><span>Leaflet</span></div>
</section>
<h2 class="score fw-bold text-white">Score: 0</h2>
<form class="quiz d-flex flex-column align-items-center">
<h2 class="fw-bold">Question:</h2>
<p>2. What is the primary exhibit at the Brussels City Museum?</p>
<input class="answer form-control align-self-start flex-shrink-0" placeholder="Your answer here">
<button type="button" class="send btn fw-bold flex-shrink-0">Submit</button>
</form>
<div class="foot-shade position-absolute"></div>
</main>
<script>
// each map sheet has its own grid: origin and units per pixel
const grid={a:[300,2.119],b:[1000,2.119],c:[1700,2.063],d:[2440,2.0103]};
const px=(s,x)=>grid[s][0]+x/grid[s][1], py=y=>700+y/2.24, NS='http://www.w3.org/2000/svg';
function el(parent,tag,at,txt){const e=document.createElementNS(NS,tag);for(const k in at)e.setAttribute(k,at[k]);if(txt)e.textContent=txt;document.getElementById(parent).append(e)}
function word(t,x,y,w,size,fill,extra){el('names','text',Object.assign({x,y,'text-anchor':'middle','font-size':size,fill,textLength:w,lengthAdjust:'spacingAndGlyphs',stroke:'#fff','stroke-opacity':.65,'stroke-width':4,'paint-order':'stroke','stroke-linejoin':'round'},extra),t)}
// place names: sheet, left, right, baseline
[['a','Lede',774,878,207],['a','Aalst',1153,1258,494],['a','nt-Lievens-',-2,230,652],['a','Houtem',8,181,713],['a','Erpe-Mere',517,744,658],['a','Haaltert',912,1087,868],['a','Denderleeuw',1323,1617,1063],['a','Liedekerke',1377,1615,1190],['a','Ninove',1040,1190,1559],
['b','Opwijk',578,726,182],['b','Merchtem',812,1032,277],['b','Asse',675,773,793],['b','Wemmel',1257,1449,800],['b','Affligem',113,297,856],['b','Ternat',497,634,1187],['b','Dilbeek',1044,1206,1429],['b','Jette',1432,1532,1146],['b','Meise',1447,1573,538],
['c','Grimbergen',156,412,557],['c','Vilvoorde',493,691,596],['c','Machelen',551,753,761],['c','Kampenhout',1214,1491,465],['c','Steenokkerzeel',959,1281,795],['c','Zaventem',787,997,1092],['c','Kortenberg',1169,1409,1039],['c','Kraainem',751,953,1295],['c','Schaerbeek',178,418,1196],['c','- Schaarbeek',158,431,1259],['c','Woluwe-Saint-',457,760,1386],['c','Lambert - Sint-',453,765,1450],['c','Lambrechts-',476,740,1513],['c','Woluwe',525,680,1576],['c','Wezembeek-',842,1114,1440],['c','Oppem',898,1056,1502],['c','Boortmeerbeek',1327,1650,49],
['d','Haacht',278,422,95],['d','Rotselaar',669,863,358],['d','Holsbeek',950,1140,669],['d','Herent',481,623,861],['d','Heverlee',584,766,1258],['d','Oud-Heverlee',352,636,1537],['d','Lubbeek',1452,1636,1083]
].forEach(([s,t,l,r,y])=>word(t,px(s,(l+r)/2),py(y),(r-l)/grid[s][1],22.5,'#3a3a3a'));
[['c','Bruxelles -',15,314,1405],['c','Brussel',60,269,1492],['d','Leuven',624,811,1109]].forEach(([s,t,l,r,y])=>word(t,px(s,(l+r)/2),py(y),(r-l)/grid[s][1],28,'#333'));
[['Brussels',866,1013,941],['Airport',876,1003,994]].forEach(([t,l,r,y])=>word(t,px('c',(l+r)/2),py(y),(r-l)/2.063,20,'#8461c4',{'font-style':'italic'}));
word('HSL 2',px('d',925),py(1315),54,18,'#777',{transform:`rotate(57 ${px('d',925)} ${py(1315)})`});
// junction numbers: sheet, number, centre, middle
[['a','18',698,586],['a','19',1106,628],['a','19',1189,702],['b','19a',235,961],['b','20',519,1059],['b','10',1242,1060],['b','21',1232,1163],['b','11',1149,1220],['b','11',1153,1265],['b','12',1161,1308],['b','12',1180,1366],['b','13',1230,1502],['b','14',1225,1545],['b','9',1388,941],['b','9',1431,919],['b','7a',1527,809],['b','3',1438,359],['b','3',1489,430],
['c','7',215,689],['c','7',293,700],['c','6',358,730],['c','6',448,755],['c','2',118,793],['c','12',810,701],['c','11',1001,131],['c','10',970,48],['c','5',685,868],['c','4',773,952],['c','3',851,934],['c','2',750,1027],['c','3',839,1120],['c','20',691,1268],['c','19',635,1296],['c','21',1080,1190],['c','21',1144,1190],['c','2',919,1375],
['d','22',1472,209],['d','21',984,512],['d','21',948,567],['d','20',815,772],['d','20',783,818],['d','18',674,908],['d','17',575,988],['d','17',541,1062],['d','16',475,1118],['d','15',440,1200],['d','15',414,1248],['d','22',193,1275],['d','23',781,1444],['d','23',847,1449]
].forEach(([s,t,x,y])=>word(t,px(s,x),py(y)+7,t.length*10.5,20,'#c03040',{'font-style':'italic'}));
// route shields
[['a','E40',289,354,'e'],['b','E40',864,1040,'e'],['c','E19',962,372,'e'],['d','E40',1150,1540,'e'],['a','N28',1110,1304,'p'],['a','N42b',144,1433,'s'],['b','N47',555,475,'s'],['b','N8',817,1492,'s'],['d','N26',301,542,'s'],['d','N2',181,919,'s']
].forEach(([s,t,x,y,k])=>{const c={e:['#ecc8d0','#d79dab','#6d2345'],p:['#f4d3cb','#e0ab9d','#7a2f2f'],s:['#f6e2cb','#deb999','#6b4a1d']}[k],w=t.length==2?42:t.length==4?66:55,X=px(s,x),Y=py(y);
el('shields','rect',{x:X-w/2,y:Y-17,width:w,height:34,rx:3,fill:c[0],stroke:c[1],'stroke-width':2});
el('shields','text',{x:X,y:Y+7.5,'text-anchor':'middle','font-size':21,fill:c[2],stroke:c[2],'stroke-width':.3,textLength:w-22+(t.length==3?2:0),lengthAdjust:'spacingAndGlyphs'},t)});
// hill tops
[['a',1479,1464],['b',589,757],['b',1437,1217],['c',552,71],['c',479,108],['c',470,161],['c',446,238],['c',66,475],['c',124,501],['c',272,650],['c',281,878],['c',177,967],['c',400,1295],['c',160,1530],['c',1320,1084],['c',1353,1079],['c',1497,1174],['d',989,192],['d',1122,229],['d',1090,341],['d',1238,394],['d',840,811],['d',1138,886],['d',421,1128],['d',1311,1178]
].forEach(([s,x,y])=>{const X=px(s,x),Y=py(y);el('hills','path',{d:`M${X-8} ${Y+6}L${X} ${Y-7}L${X+8} ${Y+6}Z`})});
</script>
</body>
</html>
